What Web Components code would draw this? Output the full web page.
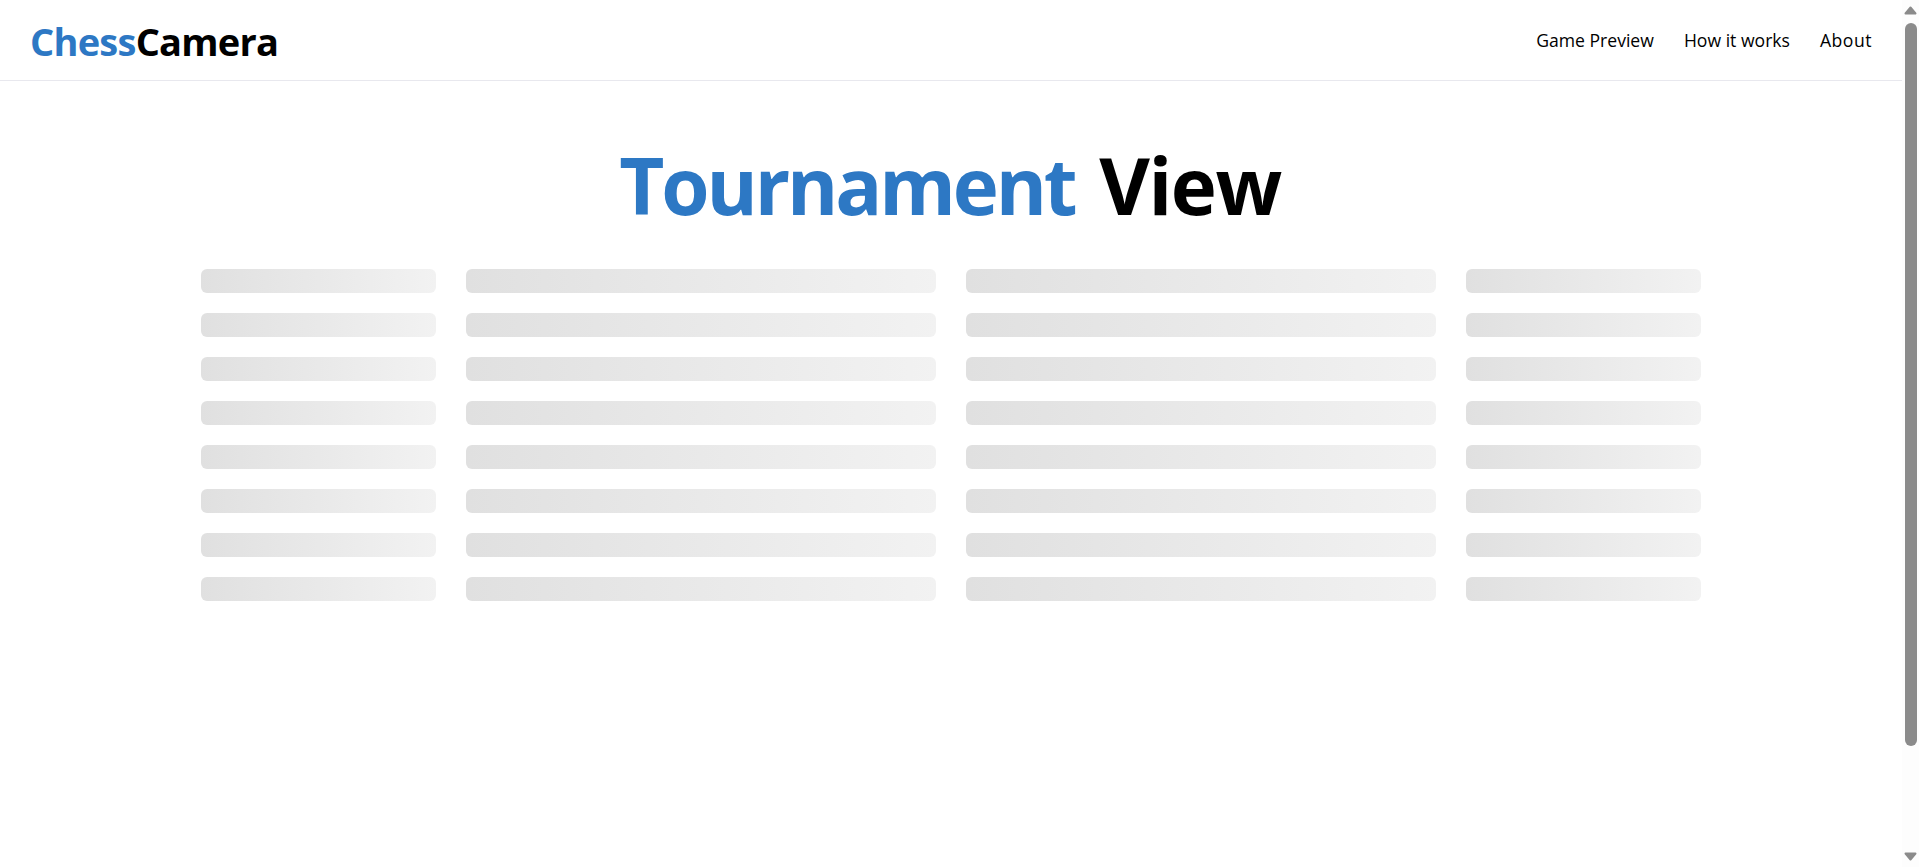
<!DOCTYPE html>
<html lang="en">
<head>
<meta charset="utf-8">
<title>ChessCamera</title>
<style>
    html, body { margin: 0; height: 100%; overflow: hidden; background: #fff; }
    body { display: flex; font-family: "Open Sans", "Noto Sans", sans-serif; }
    #page { flex: 1; min-width: 0; }
</style>
</head>
<body>
<div id="page">
    <site-header></site-header>
    <page-title><span slot="accent">Tournament</span> View</page-title>
    <skeleton-table rows="8"></skeleton-table>
</div>
<fake-scrollbar></fake-scrollbar>

<script>
const headerTemplate = document.createElement("template")
headerTemplate.innerHTML = /*html*/`
<style>
    :host {
        display: flex;
        justify-content: space-between;
        align-items: center;
        height: 80px;
        padding: 0 30px;
        border-bottom: 1px solid #e8e8ee;
    }
    .logo {
        font-size: 38px;
        font-weight: 700;
        letter-spacing: -0.76px;
        line-height: 44px;
        padding-top: 2px;
        color: #000;
        text-decoration: none;
    }
    .logo span { color: #2d78c4; }
    nav { display: flex; gap: 30px; }
    a.link {
        font-size: 17.6px;
        font-weight: 500;
        color: #000;
        text-decoration: none;
    }
    a.about { letter-spacing: 0.5px; }
</style>
<a class="logo" href="#"><span>Chess</span>Camera</a>
<nav>
    <a class="link" href="#">Game Preview</a>
    <a class="link" href="#">How it works</a>
    <a class="link about" href="#">About</a>
</nav>
`;

class SiteHeader extends HTMLElement {
    constructor(){
        super();
        this.attachShadow({mode: "open"}).append(headerTemplate.content.cloneNode(true))
    }
}
customElements.define("site-header", SiteHeader);

const titleTemplate = document.createElement("template")
titleTemplate.innerHTML = /*html*/`
<style>
    :host {
        display: block;
        margin-top: 51px;
        padding-right: 2px;
        text-align: center;
        font-size: 78px;
        font-weight: 700;
        letter-spacing: -1.5px;
        line-height: 106px;
        color: #000;
    }
    ::slotted([slot="accent"]) {
        color: #2d78c4;
        letter-spacing: -3.1px;
        margin-right: 6px;
    }
</style>
<slot name="accent"></slot>
<slot></slot>
`;

class PageTitle extends HTMLElement {
    constructor(){
        super();
        this.attachShadow({mode: "open"}).append(titleTemplate.content.cloneNode(true))
    }
}
customElements.define("page-title", PageTitle);

class SkeletonTable extends HTMLElement {
    constructor(){
        super();
        this.attachShadow({mode: "open"})
    }
    connectedCallback(){
        const rows = Number(this.getAttribute("rows")) || 8
        let cells = ""
        for (let i = 0; i < rows * 4; i++) cells += `<div class="bar"></div>`
        this.shadowRoot.innerHTML = /*html*/`
        <style>
            :host {
                display: grid;
                grid-template-columns: 1fr 2fr 2fr 1fr;
                gap: 20px 30px;
                width: 1500px;
                margin: 31px auto 0;
            }
            .bar {
                height: 24px;
                border-radius: 6px;
                background: linear-gradient(90deg, #e0e0e0, #f2f2f2);
            }
        </style>
        ${cells}`
    }
}
customElements.define("skeleton-table", SkeletonTable);

const scrollTemplate = document.createElement("template")
scrollTemplate.innerHTML = /*html*/`
<style>
    :host {
        display: flex;
        flex-direction: column;
        align-items: center;
        flex: 0 0 17px;
        height: 100vh;
        background: #fdfdfd;
    }
    svg { flex: none; display: block; }
    .up { margin-top: 6px; }
    .thumb {
        width: 12px;
        height: 723px;
        margin-top: 8px;
        border-radius: 6px;
        background: #8b8b8b;
    }
    .down { margin-top: auto; margin-bottom: 6px; }
</style>
<svg class="up" width="13" height="9" viewBox="0 0 13 9"><path d="M6.5 1.5 L11.5 7.5 H1.5 Z" fill="#8b8b8b" stroke="#8b8b8b" stroke-width="2" stroke-linejoin="round"/></svg>
<div class="thumb"></div>
<svg class="down" width="13" height="9" viewBox="0 0 13 9"><path d="M6.5 7.5 L11.5 1.5 H1.5 Z" fill="#8b8b8b" stroke="#8b8b8b" stroke-width="2" stroke-linejoin="round"/></svg>
`;

class FakeScrollbar extends HTMLElement {
    constructor(){
        super();
        this.attachShadow({mode: "open"}).append(scrollTemplate.content.cloneNode(true))
    }
}
customElements.define("fake-scrollbar", FakeScrollbar);
</script>
</body>
</html>
